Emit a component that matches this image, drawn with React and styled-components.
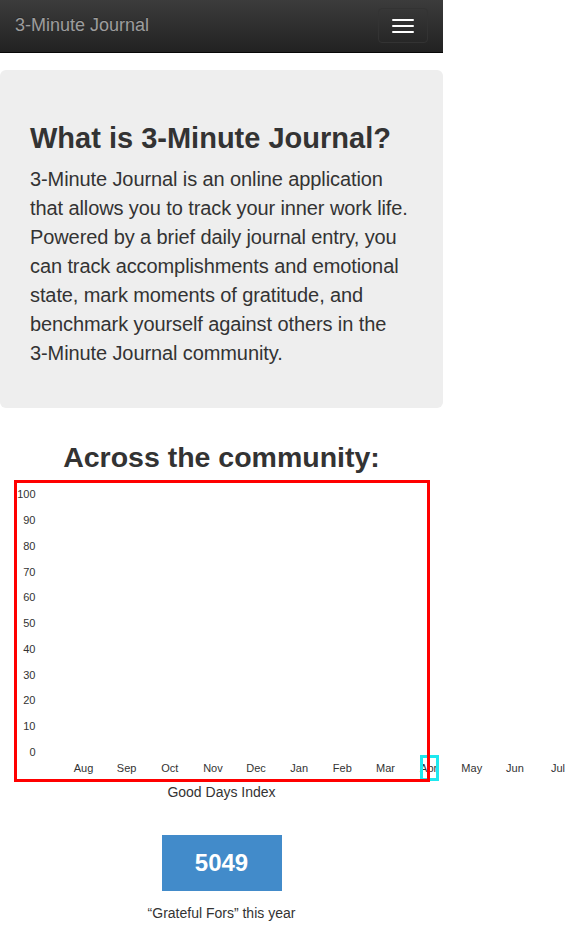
import React from 'react'
import styled, { createGlobalStyle } from 'styled-components'

const months = ['Aug', 'Sep', 'Oct', 'Nov', 'Dec', 'Jan', 'Feb', 'Mar', 'Apr', 'May', 'Jun', 'Jul']
const ticks = [100, 90, 80, 70, 60, 50, 40, 30, 20, 10, 0]

const GlobalStyle = createGlobalStyle`
  body {
    margin: 0;
    background: #fff;
    color: #333;
    font-family: "Liberation Sans", Arial, Helvetica, sans-serif;
  }
`

const Page = styled.div`
  width: 443px;
`

const Navbar = styled.nav`
  height: 52px;
  display: flex;
  justify-content: space-between;
  align-items: flex-start;
  padding: 0 15px;
  background: linear-gradient(to bottom, #3c3c3c 0%, #222 100%);
  border-bottom: 1px solid #080808;
`

const Brand = styled.a`
  padding-top: 15px;
  font-size: 18px;
  line-height: 20px;
  color: #9d9d9d;
  text-decoration: none;
  text-shadow: 0 -1px 0 rgba(0, 0, 0, 0.25);
`

const Toggle = styled.button`
  margin-top: 8px;
  padding: 10px 13px 9px;
  display: flex;
  flex-direction: column;
  gap: 4px;
  background: transparent;
  border: 1px solid #333;
  border-radius: 4px;
`

const Bar = styled.span`
  display: block;
  width: 22px;
  height: 2px;
  border-radius: 1px;
  background: #fff;
`

const Jumbotron = styled.section`
  margin-top: 17px;
  padding: 52px 30px 40px;
  background: #eee;
  border-radius: 6px;
`

const Title = styled.h1`
  margin: 0 0 11px;
  font-size: 29px;
  line-height: 32px;
  font-weight: 700;
  color: #333;
`

const Lead = styled.p`
  margin: 0;
  font-size: 20px;
  line-height: 29px;
  letter-spacing: -0.1px;
  color: #333;
`

const NoWrap = styled.span`
  white-space: nowrap;
`

const SectionTitle = styled.h2`
  margin: 33px 0 7px;
  text-align: center;
  font-size: 28.5px;
  line-height: 32px;
  font-weight: 700;
  color: #333;
`

const ChartFrame = styled.div`
  position: relative;
  margin-left: 14px;
  width: 416px;
  height: 302px;

  &::after {
    content: '';
    position: absolute;
    inset: 0;
    border: 3px solid #ff0000;
    z-index: 2;
    pointer-events: none;
  }
`

const ChartSvg = styled.svg`
  display: block;
  overflow: visible;

  text {
    font-family: "Liberation Sans", Arial, sans-serif;
    font-size: 11px;
    fill: #333;
  }
`

const Highlight = styled.div`
  position: absolute;
  left: 406px;
  top: 275px;
  width: 19px;
  height: 26px;
  box-sizing: border-box;
  border: 3px solid #1ee8ef;
  z-index: 1;
`

const Caption = styled.div`
  text-align: center;
  font-size: 14px;
  line-height: 20px;
  color: #333;
`

const Counter = styled.div`
  margin: 33px auto 0;
  width: 120px;
  height: 56px;
  display: flex;
  align-items: center;
  justify-content: center;
  background: #428bca;
  color: #fff;
  font-size: 24px;
  font-weight: 700;
`

const CounterLabel = styled(Caption)`
  margin-top: 12px;
`

const Chart = () => (
  <ChartFrame>
    <ChartSvg width="550" height="302" viewBox="0 0 550 302">
      {ticks.map((t, i) => (
        <text key={t} x="21.5" y={14.3 + i * 25.77} textAnchor="end" dominantBaseline="central">
          {t}
        </text>
      ))}
      {months.map((m, i) => (
        <text key={m} x={69.5 + i * 43.14} y="288.3" textAnchor="middle" dominantBaseline="central">
          {m}
        </text>
      ))}
    </ChartSvg>
    <Highlight />
  </ChartFrame>
)

const App = () => {
  return (
    <Page>
      <GlobalStyle />
      <Navbar>
        <Brand href="#">3-Minute Journal</Brand>
        <Toggle aria-label="Toggle navigation">
          <Bar />
          <Bar />
          <Bar />
        </Toggle>
      </Navbar>

      <Jumbotron>
        <Title>What is 3-Minute Journal?</Title>
        <Lead>
          3-Minute Journal is an online application that allows you to track your inner work life.
          Powered by a brief daily journal entry, you can track accomplishments and emotional state,
          mark moments of gratitude, and benchmark yourself against others in the <NoWrap>3-Minute</NoWrap> Journal
          community.
        </Lead>
      </Jumbotron>

      <SectionTitle>Across the community:</SectionTitle>
      <Chart />
      <Caption>Good Days Index</Caption>

      <Counter>5049</Counter>
      <CounterLabel>“Grateful Fors” this year</CounterLabel>
    </Page>
  )
}

export default App
